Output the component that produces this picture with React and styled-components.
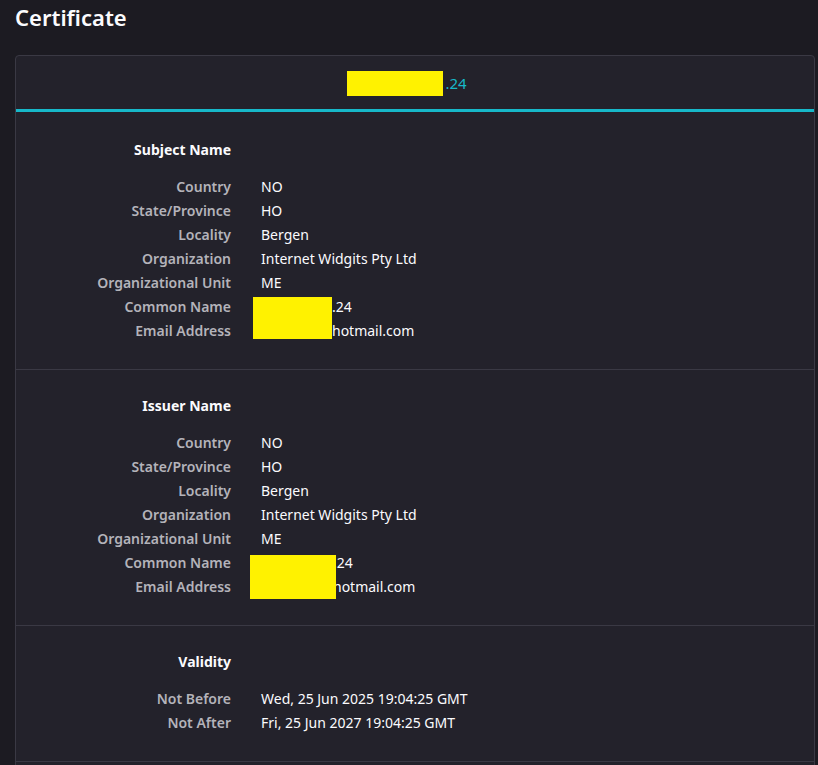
import React from "react";
import styled, { createGlobalStyle } from "styled-components";

const GlobalStyle = createGlobalStyle`
  html, body {
    margin: 0;
    padding: 0;
    background: #1c1b22;
    overflow: hidden;
  }
  body {
    font-family: "Noto Sans", "Open Sans", sans-serif;
    color: #fbfbfe;
  }
`;

const sections = [
  {
    title: "Subject Name",
    rows: [
      { label: "Country", value: "NO" },
      { label: "State/Province", value: "HO" },
      { label: "Locality", value: "Bergen" },
      { label: "Organization", value: "Internet Widgits Pty Ltd" },
      { label: "Organizational Unit", value: "ME" },
      { label: "Common Name", value: ".24", hidden: 71, redact: { left: -8, top: 2, w: 79, h: 42 } },
      { label: "Email Address", value: "hotmail.com", hidden: 71 },
    ],
  },
  {
    title: "Issuer Name",
    rows: [
      { label: "Country", value: "NO" },
      { label: "State/Province", value: "HO" },
      { label: "Locality", value: "Bergen" },
      { label: "Organization", value: "Internet Widgits Pty Ltd" },
      { label: "Organizational Unit", value: "ME" },
      { label: "Common Name", value: ".24", hidden: 72, redact: { left: -11, top: 4, w: 86, h: 44 } },
      { label: "Email Address", value: "hotmail.com", hidden: 72 },
    ],
  },
  {
    title: "Validity",
    rows: [
      { label: "Not Before", value: "Wed, 25 Jun 2025 19:04:25 GMT" },
      { label: "Not After", value: "Fri, 25 Jun 2027 19:04:25 GMT" },
    ],
  },
];

const App = () => {
  return (
    <>
      <GlobalStyle />
      <Page>
        <Title>Certificate</Title>
        <Card>
          <Header>
            <HeaderRedact />
            <HeaderText>.24</HeaderText>
          </Header>
          {sections.map((section, i) => (
            <Section key={i} $first={i === 0}>
              <Grid>
                <Heading>{section.title}</Heading>
                <span />
                {section.rows.map((row, j) => (
                  <React.Fragment key={j}>
                    <Label>{row.label}</Label>
                    <Value>
                      {row.redact && (
                        <Redact
                          style={{
                            left: row.redact.left,
                            top: row.redact.top,
                            width: row.redact.w,
                            height: row.redact.h,
                          }}
                        />
                      )}
                      {row.hidden && <Gap $w={row.hidden} />}
                      {row.value}
                    </Value>
                  </React.Fragment>
                ))}
              </Grid>
            </Section>
          ))}
        </Card>
      </Page>
    </>
  );
};
export default App;

const Page = styled.div`
  padding: 0 15px;
`;

const Title = styled.h1`
  margin: 0;
  padding-top: 1px;
  height: 54px;
  font-size: 22px;
  font-weight: 600;
  line-height: 32px;
  color: #fbfbfe;
`;

const Card = styled.div`
  width: 798px;
  min-height: 720px;
  background: #23222b;
  border: 1px solid #3a3944;
  border-radius: 4px;
`;

const Header = styled.div`
  display: flex;
  justify-content: center;
  align-items: center;
  padding: 1px 16px 0 0;
  box-sizing: border-box;
  border-bottom: 3px solid #17b8c9;
  height: 56px;
`;

const HeaderRedact = styled.span`
  display: inline-block;
  width: 96px;
  height: 25px;
  background: #fff200;
`;

const HeaderText = styled.span`
  font-size: 15px;
  color: #17b8c9;
  padding-left: 2px;
`;

const Section = styled.div`
  padding: ${(p) => (p.$first ? "26px" : "24px")} 0 26px;
  border-bottom: 1px solid #3a3944;
`;

const Grid = styled.div`
  display: grid;
  grid-template-columns: 215px 1fr;
  column-gap: 30px;
  font-size: 14px;
  line-height: 24px;
`;

const Heading = styled.div`
  text-align: right;
  font-weight: 700;
  color: #fbfbfe;
  margin-bottom: 13px;
`;

const Label = styled.div`
  text-align: right;
  font-weight: 600;
  color: #b4b3ba;
`;

const Value = styled.div`
  position: relative;
  color: #fbfbfe;
`;

const Gap = styled.span`
  display: inline-block;
  width: ${(p) => p.$w}px;
`;

const Redact = styled.span`
  position: absolute;
  background: #fff200;
  z-index: 1;
`;
